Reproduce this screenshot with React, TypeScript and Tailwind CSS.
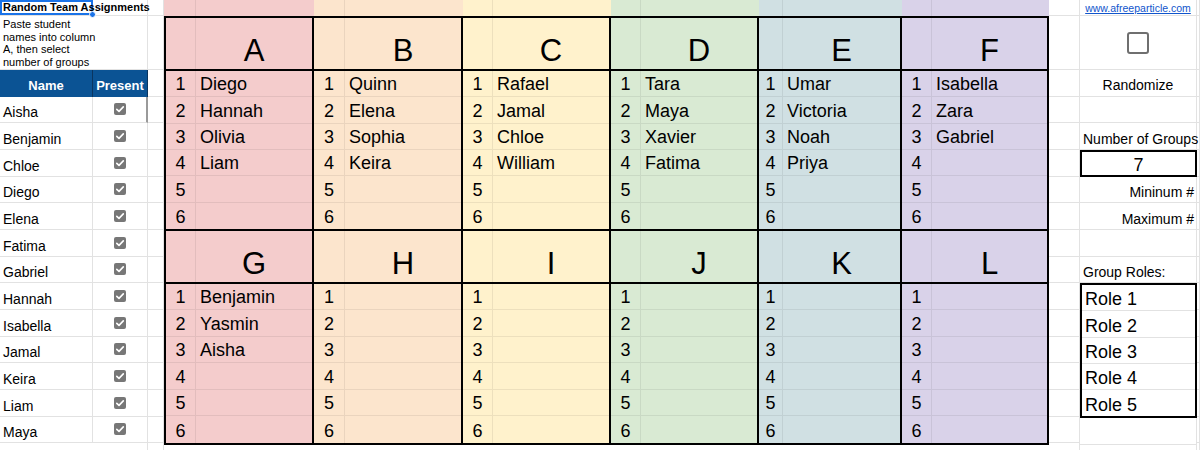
import React from "react";

type Group = {
  top: string;
  bottom: string;
  bg: string;
  numW: string;
  nameW: string;
  bandNumW: string;
  bandW: string;
  topNames: string[];
  bottomNames: string[];
  last?: boolean;
};

const groups: Group[] = [
  { top: "A", bottom: "G", bg: "bg-[#f4cccc]", numW: "w-[30px]", nameW: "w-[116px]", bandNumW: "w-[32px]", bandW: "w-[150px]", topNames: ["Diego", "Hannah", "Olivia", "Liam"], bottomNames: ["Benjamin", "Yasmin", "Aisha"] },
  { top: "B", bottom: "H", bg: "bg-[#fce5cd]", numW: "w-[31px]", nameW: "w-[116px]", bandNumW: "w-[31px]", bandW: "w-[149px]", topNames: ["Quinn", "Elena", "Sophia", "Keira"], bottomNames: [] },
  { top: "C", bottom: "I", bg: "bg-[#fff2cc]", numW: "w-[30px]", nameW: "w-[116px]", bandNumW: "w-[30px]", bandW: "w-[148px]", topNames: ["Rafael", "Jamal", "Chloe", "William"], bottomNames: [] },
  { top: "D", bottom: "J", bg: "bg-[#d9ead3]", numW: "w-[30px]", nameW: "w-[116px]", bandNumW: "w-[30px]", bandW: "w-[148px]", topNames: ["Tara", "Maya", "Xavier", "Fatima"], bottomNames: [] },
  { top: "E", bottom: "K", bg: "bg-[#d0e0e3]", numW: "w-[24px]", nameW: "w-[117px]", bandNumW: "w-[24px]", bandW: "w-[143px]", topNames: ["Umar", "Victoria", "Noah", "Priya"], bottomNames: [] },
  { top: "F", bottom: "L", bg: "bg-[#d9d2e9]", numW: "w-[30px]", nameW: "w-[115px]", bandNumW: "w-[30px]", bandW: "w-[147px]", topNames: ["Isabella", "Zara", "Gabriel"], bottomNames: [], last: true },
];

const students = ["Aisha", "Benjamin", "Chloe", "Diego", "Elena", "Fatima", "Gabriel", "Hannah", "Isabella", "Jamal", "Keira", "Liam", "Maya"];

const ROWS = Array.from({ length: 17 }, (_, i) => i);
const rowH = (i: number) => (i === 0 ? "h-[16px]" : i === 1 ? "h-[54px]" : i < 16 ? "h-[26.67px]" : "h-[20px]");
const FAINT = "border-black/[0.07]";

function Spacer({ w }: { w: string }) {
  return (
    <div className={`flex flex-col shrink-0 ${w}`}>
      {ROWS.map((i) => (
        <div key={i} className={`${rowH(i)} shrink-0 border-r border-b border-[#e2e2e2]`} />
      ))}
    </div>
  );
}

function CheckedBox() {
  return (
    <div className="flex h-[12px] w-[12px] items-center justify-center rounded-[2px] bg-[#777777]">
      <svg viewBox="0 0 12 12" className="h-[12px] w-[12px]">
        <path d="M2.8 6.3 L5 8.4 L9.3 3.9" fill="none" stroke="white" strokeWidth="1.6" strokeLinecap="round" strokeLinejoin="round" />
      </svg>
    </div>
  );
}

function LeftPanel() {
  return (
    <div className="flex w-[148px] shrink-0 flex-col">
      <div className="flex h-[16px] shrink-0">
        <div className="relative w-[93px] shrink-0 border-b border-[#e2e2e2]">
          <div className="relative z-10 whitespace-nowrap pl-[3px] text-[11px] font-bold leading-[15px]">Random Team Assignments</div>
          <div className="absolute inset-0 border-2 border-[#1a73e8]" />
          <div className="absolute -bottom-[3px] -right-[3px] z-20 h-[7px] w-[7px] rounded-full border border-white bg-[#1a73e8]" />
        </div>
        <div className="w-[55px] border-r border-b border-[#e2e2e2]" />
      </div>
      <div className="flex h-[54px] shrink-0">
        <div className="w-[93px] border-b border-[#e2e2e2] pl-[3px] pt-[2px] text-[11px] leading-[12.5px]">
          <div className="whitespace-nowrap">Paste student</div>
          <div className="whitespace-nowrap">names into column</div>
          <div className="whitespace-nowrap">A, then select</div>
          <div className="whitespace-nowrap">number of groups</div>
        </div>
        <div className="w-[55px] border-r border-b border-[#e2e2e2]" />
      </div>
      <div className="flex h-[26.67px] shrink-0 bg-[#0b5394] text-[13px] font-bold leading-[16px] text-white">
        <div className="flex w-[93px] items-end justify-center border-r border-[#0a3560] pb-[3px]">Name</div>
        <div className="flex w-[55px] items-end justify-center border-r border-[#0a3560] pb-[3px]">Present</div>
      </div>
      {students.map((s, i) => (
        <div key={s} className="flex h-[26.67px] shrink-0 text-[14px] leading-[17px]">
          <div className="flex w-[93px] items-end border-r border-b border-[#e2e2e2] pb-[1px] pl-[3px]">{s}</div>
          <div className={`flex w-[55px] items-center justify-center border-b border-[#e2e2e2] ${i === 0 ? "border-r-2 border-r-[#9a9a9a]" : "border-r"}`}>
            <CheckedBox />
          </div>
        </div>
      ))}
      <div className="h-[20px] border-r border-[#e2e2e2]" />
    </div>
  );
}

function GroupHalf({ g, letter, names, rowClass }: { g: Group; letter: string; names: string[]; rowClass: string }) {
  return (
    <>
      <div className="flex h-[53px] shrink-0 border-b-2 border-black">
        <div className={`${g.numW} shrink-0 border-r ${FAINT}`} />
        <div className={`${g.nameW} flex shrink-0 items-end justify-center pb-[3px] text-[31px] leading-[31px]`}>{letter}</div>
      </div>
      {[0, 1, 2, 3, 4, 5].map((i) => (
        <div key={i} className={`flex shrink-0 ${rowClass} ${i < 5 ? `border-b ${FAINT}` : ""} text-[18px] leading-[20px]`}>
          <div className={`${g.numW} flex shrink-0 items-end justify-center border-r ${FAINT} pb-[2px]`}>{i + 1}</div>
          <div className={`${g.nameW} flex shrink-0 items-end pb-[2px] pl-[4px]`}>{names[i] ?? ""}</div>
        </div>
      ))}
    </>
  );
}

function GroupColumn({ g }: { g: Group }) {
  return (
    <div className={`flex flex-col ${g.bg} ${g.last ? "" : "border-r-2 border-black"}`}>
      <GroupHalf g={g} letter={g.top} names={g.topNames} rowClass="h-[26.33px]" />
      <div className="h-[2px] shrink-0 bg-black" />
      <GroupHalf g={g} letter={g.bottom} names={g.bottomNames} rowClass="h-[26.5px]" />
    </div>
  );
}

function GroupTable() {
  return (
    <div className="flex w-[885px] shrink-0 flex-col">
      <div className="flex h-[16px] shrink-0">
        {groups.map((g) => (
          <div key={g.top} className={`flex ${g.bandW} ${g.bg}`}>
            <div className={`${g.bandNumW} border-r ${FAINT}`} />
            <div className="flex-1" />
          </div>
        ))}
      </div>
      <div className="flex border-2 border-black">
        {groups.map((g) => (
          <GroupColumn key={g.top} g={g} />
        ))}
      </div>
    </div>
  );
}

function RightPanel() {
  const cell = "shrink-0 border-r border-b border-[#e2e2e2]";
  return (
    <div className="flex w-[117px] shrink-0 flex-col text-[14px] leading-[17px]">
      <div className={`flex h-[16px] items-center justify-center ${cell}`}>
        <span className="whitespace-nowrap text-[10.5px] leading-[14px] text-[#1155cc] underline">www.afreeparticle.com</span>
      </div>
      <div className={`flex h-[54px] items-center justify-center ${cell}`}>
        <div className="h-[22px] w-[22px] rounded-[3px] border-[2.5px] border-[#6f6f6f]" />
      </div>
      <div className={`flex h-[26.67px] items-end justify-center pb-[2px] ${cell}`}>Randomize</div>
      <div className={`h-[26.67px] ${cell}`} />
      <div className={`flex h-[26.67px] items-end whitespace-nowrap pb-[1px] pl-[3px] ${cell}`}>Number of Groups</div>
      <div className="flex h-[26.67px] shrink-0 items-end justify-center border-2 border-black text-[18px] leading-[20px]">7</div>
      <div className={`flex h-[26.67px] items-end justify-end pb-[1px] pr-[2px] ${cell}`}>Mininum #</div>
      <div className={`flex h-[26.67px] items-end justify-end pb-[1px] pr-[2px] ${cell}`}>Maximum #</div>
      <div className={`h-[26.67px] ${cell}`} />
      <div className={`flex h-[26.67px] items-end pb-[1px] pl-[3px] ${cell}`}>Group Roles:</div>
      <div className="flex shrink-0 flex-col border-2 border-black text-[18px] leading-[20px]">
        {["Role 1", "Role 2", "Role 3", "Role 4", "Role 5"].map((r, i) => (
          <div key={r} className={`flex h-[26.2px] shrink-0 items-end pb-[1px] pl-[3px] ${i < 4 ? "border-b border-[#e2e2e2]" : ""}`}>
            {r}
          </div>
        ))}
      </div>
      <div className={`h-[26.67px] ${cell}`} />
      <div className={`h-[20px] ${cell}`} />
    </div>
  );
}

export default function App() {
  return (
    <div className="flex h-[450px] w-[1200px] overflow-hidden bg-white font-['Liberation_Sans',Arial,sans-serif] text-black">
      <LeftPanel />
      <Spacer w="w-[16px]" />
      <GroupTable />
      <Spacer w="w-[31px]" />
      <RightPanel />
      <Spacer w="flex-1" />
    </div>
  );
}
